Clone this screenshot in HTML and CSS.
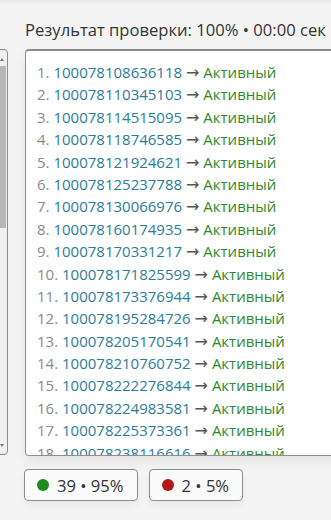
FILE: index.html
```html
<!DOCTYPE html>
<html>
<head>
	<title>Результат проверки</title>
	<link rel="stylesheet" href="styles.css">
</head>
<body>
	<div class="top-band"></div>
	<p class="title">Результат проверки: 100% • 00:00 сек</p>

	<div class="panels">
		<div class="input-box">
			<div class="scroll-arrow up"></div>
			<div class="scroll-thumb"></div>
			<div class="scroll-arrow down"></div>
		</div>
		<div class="result-box">
			<ol class="result-list">
				<li><span class="num">1.</span> <span class="id">100078108636118</span> <span class="arrow">→</span> <span class="ok">Активный</span></li>
				<li><span class="num">2.</span> <span class="id">100078110345103</span> <span class="arrow">→</span> <span class="ok">Активный</span></li>
				<li><span class="num">3.</span> <span class="id">100078114515095</span> <span class="arrow">→</span> <span class="ok">Активный</span></li>
				<li><span class="num">4.</span> <span class="id">100078118746585</span> <span class="arrow">→</span> <span class="ok">Активный</span></li>
				<li><span class="num">5.</span> <span class="id">100078121924621</span> <span class="arrow">→</span> <span class="ok">Активный</span></li>
				<li><span class="num">6.</span> <span class="id">100078125237788</span> <span class="arrow">→</span> <span class="ok">Активный</span></li>
				<li><span class="num">7.</span> <span class="id">100078130066976</span> <span class="arrow">→</span> <span class="ok">Активный</span></li>
				<li><span class="num">8.</span> <span class="id">100078160174935</span> <span class="arrow">→</span> <span class="ok">Активный</span></li>
				<li><span class="num">9.</span> <span class="id">100078170331217</span> <span class="arrow">→</span> <span class="ok">Активный</span></li>
				<li><span class="num">10.</span> <span class="id">100078171825599</span> <span class="arrow">→</span> <span class="ok">Активный</span></li>
				<li><span class="num">11.</span> <span class="id">100078173376944</span> <span class="arrow">→</span> <span class="ok">Активный</span></li>
				<li><span class="num">12.</span> <span class="id">100078195284726</span> <span class="arrow">→</span> <span class="ok">Активный</span></li>
				<li><span class="num">13.</span> <span class="id">100078205170541</span> <span class="arrow">→</span> <span class="ok">Активный</span></li>
				<li><span class="num">14.</span> <span class="id">100078210760752</span> <span class="arrow">→</span> <span class="ok">Активный</span></li>
				<li><span class="num">15.</span> <span class="id">100078222276844</span> <span class="arrow">→</span> <span class="ok">Активный</span></li>
				<li><span class="num">16.</span> <span class="id">100078224983581</span> <span class="arrow">→</span> <span class="ok">Активный</span></li>
				<li><span class="num">17.</span> <span class="id">100078225373361</span> <span class="arrow">→</span> <span class="ok">Активный</span></li>
				<li><span class="num">18.</span> <span class="id">100078238116616</span> <span class="arrow">→</span> <span class="ok">Активный</span></li>
				<li><span class="num">19.</span> <span class="id">100078241950372</span> <span class="arrow">→</span> <span class="ok">Активный</span></li>
			</ol>
		</div>
	</div>

	<div class="stats">
		<div class="chip"><span class="dot green"></span>39 • 95%</div>
		<div class="chip"><span class="dot red"></span>2 • 5%</div>
	</div>
</body>
</html>
```

FILE: styles.css
```css
html, body {
	margin: 0;
	overflow: hidden;
}

body {
	background: #f4f4f4;
	font-family: "Open Sans", "Noto Sans", sans-serif;
	color: #333;
	height: 520px;
}

.top-band {
	height: 6px;
	background: linear-gradient(#e9e9e9, #f4f4f4);
}

.title {
	margin: 13px 0 0 25px;
	font-size: 16.6px;
	line-height: 22px;
	color: #333;
	white-space: nowrap;
}

.panels {
	display: flex;
	gap: 17px;
	margin-top: 8px;
	margin-left: -14px;
}

.input-box {
	width: 22px;
	height: 406px;
	flex: none;
	box-sizing: border-box;
	border: 1px solid #8c8c8c;
	border-radius: 0 4px 4px 0;
	background: #f0f0f0;
	display: flex;
	flex-direction: column;
	align-items: flex-end;
	padding: 4px 1px;
}

.scroll-arrow {
	width: 8px;
	height: 10px;
	position: relative;
}

.scroll-arrow::after {
	content: "";
	position: absolute;
	left: 2px;
	border-left: 2px solid transparent;
	border-right: 2px solid transparent;
}

.scroll-arrow.up::after {
	top: 4px;
	border-bottom: 3px solid #777;
}

.scroll-arrow.down {
	margin-top: auto;
}

.scroll-arrow.down::after {
	top: 4px;
	border-top: 3px solid #777;
}

.scroll-thumb {
	width: 8px;
	height: 162px;
	margin-top: 2px;
	background: #c2c2c2;
	background-image: radial-gradient(#aaa 0.6px, transparent 0.8px);
	background-size: 2px 2px;
}

.result-box {
	width: 330px;
	height: 407px;
	flex: none;
	box-sizing: border-box;
	border: 1px solid #8f8f8f;
	border-top: 2px solid #8a8a8a;
	border-radius: 4px;
	background: #fff;
	box-shadow: 0 6px 12px rgba(0, 0, 0, 0.07);
	overflow: hidden;
	padding: 10px 11px 0;
}

.result-list {
	list-style: none;
	margin: 0;
	padding: 0;
	font-size: 15px;
	line-height: 22.4px;
	white-space: nowrap;
}

.result-list li {
	height: 22.4px;
}

.num {
	color: #8a8a8a;
}

.id {
	color: #2b7c9a;
}

.arrow {
	font-family: "DejaVu Sans", sans-serif;
	font-size: 16px;
	line-height: 0;
	color: #555;
}

.ok {
	color: #2e8a2e;
}

.stats {
	display: flex;
	gap: 11px;
	margin: 13px 0 0 24px;
}

.chip {
	display: flex;
	align-items: center;
	gap: 8px;
	height: 32px;
	box-sizing: border-box;
	padding: 0 13px 0 12px;
	border: 1px solid #8c8c8c;
	border-radius: 4px;
	background: #fafafa;
	font-size: 16.6px;
	color: #333;
	box-shadow: 0 4px 8px rgba(0, 0, 0, 0.05);
}

.dot {
	width: 12px;
	height: 12px;
	border-radius: 50%;
}

.dot.green {
	background: #1f8a1f;
}

.dot.red {
	background: #b51616;
}
```
